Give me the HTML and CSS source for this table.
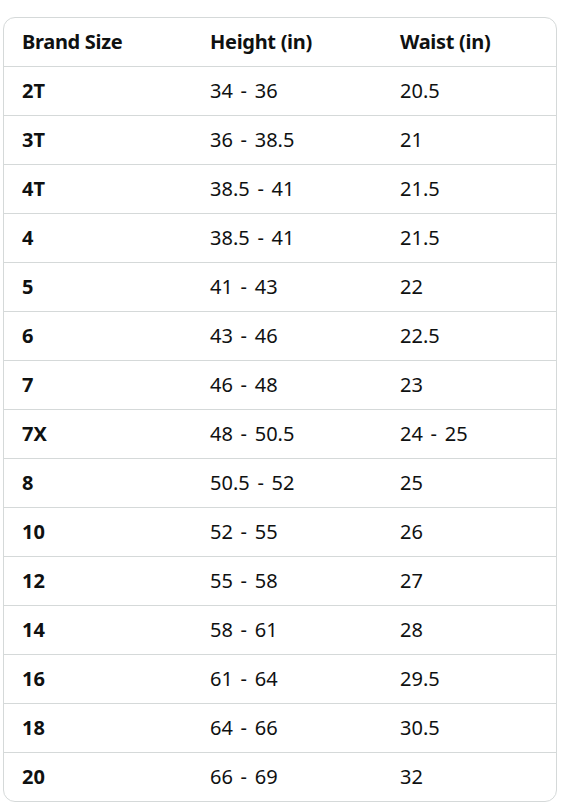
FILE: index.html
```html
<!DOCTYPE html>
<html>
<head>
<meta charset="utf-8">
<link rel="stylesheet" href="styles.css">
</head>
<body>
<div class="wrap">
<table class="size-table">
<thead>
<tr><th class="c1">Brand Size</th><th class="c2">Height (in)</th><th class="c3">Waist (in)</th></tr>
</thead>
<tbody>
<tr><td class="b">2T</td><td>34 - 36</td><td>20.5</td></tr>
<tr><td class="b">3T</td><td>36 - 38.5</td><td>21</td></tr>
<tr><td class="b">4T</td><td>38.5 - 41</td><td>21.5</td></tr>
<tr><td class="b">4</td><td>38.5 - 41</td><td>21.5</td></tr>
<tr><td class="b">5</td><td>41 - 43</td><td>22</td></tr>
<tr><td class="b">6</td><td>43 - 46</td><td>22.5</td></tr>
<tr><td class="b">7</td><td>46 - 48</td><td>23</td></tr>
<tr><td class="b">7X</td><td>48 - 50.5</td><td>24 - 25</td></tr>
<tr><td class="b">8</td><td>50.5 - 52</td><td>25</td></tr>
<tr><td class="b">10</td><td>52 - 55</td><td>26</td></tr>
<tr><td class="b">12</td><td>55 - 58</td><td>27</td></tr>
<tr><td class="b">14</td><td>58 - 61</td><td>28</td></tr>
<tr><td class="b">16</td><td>61 - 64</td><td>29.5</td></tr>
<tr><td class="b">18</td><td>64 - 66</td><td>30.5</td></tr>
<tr><td class="b">20</td><td>66 - 69</td><td>32</td></tr>
</tbody>
</table>
</div>
</body>
</html>
```

FILE: styles.css
```css
html, body {
  margin: 0;
  padding: 0;
  background: #ffffff;
}
body {
  font-family: "Noto Sans", "Open Sans", sans-serif;
  color: #0f1111;
}
.wrap {
  padding: 17px 0 0 3px;
}
.size-table {
  width: 554px;
  border-collapse: separate;
  border-spacing: 0;
  border: 1px solid #d5d9d9;
  border-radius: 12px;
  table-layout: fixed;
}
.size-table th,
.size-table td {
  font-size: 20px;
  line-height: 24px;
  height: 24px;
  padding: 12px 0 12px 18px;
  text-align: left;
  vertical-align: middle;
}
.size-table th {
  font-weight: 700;
  letter-spacing: -0.3px;
}
.size-table td {
  border-top: 1px solid #d5d9d9;
  font-weight: 400;
  word-spacing: 2.5px;
}
.size-table td.b {
  font-weight: 700;
}
.c1 { width: 170px; }
.c2 { width: 172px; }
.c3 { width: auto; }
```
